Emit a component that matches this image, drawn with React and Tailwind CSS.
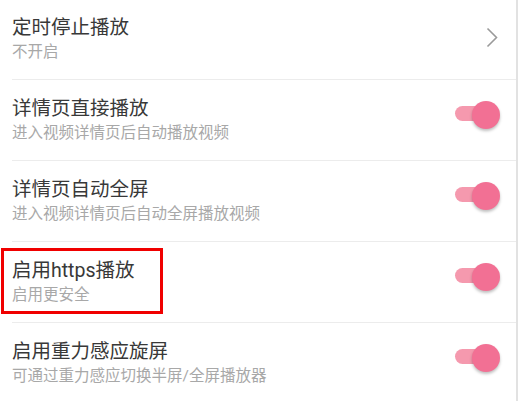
import React, { useState } from 'react';

// 播放设置列表
const items = [
  { id: 'timer', title: '定时停止播放', desc: '不开启', type: 'link' },
  { id: 'autoplay', title: '详情页直接播放', desc: '进入视频详情页后自动播放视频', type: 'switch' },
  { id: 'fullscreen', title: '详情页自动全屏', desc: '进入视频详情页后自动全屏播放视频', type: 'switch' },
  { id: 'https', title: '启用https播放', desc: '启用更安全', type: 'switch', marked: true },
  { id: 'gravity', title: '启用重力感应旋屏', desc: '可通过重力感应切换半屏/全屏播放器', type: 'switch' },
];

const Toggle = ({ on, onClick }) => (
  <button onClick={onClick} className="relative w-[46px] h-[28px] shrink-0">
    <span
      className={`absolute left-0 top-[5px] h-[15px] w-[40px] rounded-full ${
        on ? 'bg-[#f599ae]' : 'bg-[#c8c8c8]'
      }`}
    />
    <span
      className={`absolute top-0 h-[28px] w-[28px] rounded-full shadow-[0_2px_3px_rgba(0,0,0,0.25)] ${
        on ? 'left-[17px] bg-[#f27094]' : 'left-[-6px] bg-[#f5f5f5]'
      }`}
    />
  </button>
);

const Chevron = () => (
  <svg width="12" height="21" viewBox="0 0 12 21" fill="none" className="mr-[18px] mb-[4px]">
    <path d="M1.5 1.5L10.5 10.5L1.5 19.5" stroke="#9a9a9a" strokeWidth="1.6" />
  </svg>
);

export default function App() {
  const [state, setState] = useState({ autoplay: true, fullscreen: true, https: true, gravity: true });

  return (
    <div
      className="flex w-[519px] h-[401px] overflow-hidden bg-white"
      style={{ fontFamily: 'Roboto, "Noto Sans CJK SC", sans-serif' }}
    >
      <div className="relative w-[516px] -mt-[1px]">
        {items.map((item, i) => (
          <div key={item.id}>
            {i > 0 && <div className="ml-3 h-px bg-[#ececec]" />}
            <div className="flex items-center h-[80px] pl-3">
              <div className="flex-1 flex flex-col">
                <span className="text-[19.5px] leading-[24px] text-[#383838]">{item.title}</span>
                <span className="text-[15.5px] leading-[20px] mt-[2px] text-[#a8a8a8]">{item.desc}</span>
              </div>
              {item.type === 'link' ? (
                <Chevron />
              ) : (
                <div className="mr-[15px] mt-[-4px]">
                  <Toggle
                    on={state[item.id]}
                    onClick={() => setState({ ...state, [item.id]: !state[item.id] })}
                  />
                </div>
              )}
            </div>
          </div>
        ))}

        {/* 标注框 */}
        <div className="absolute left-[1px] top-[249px] w-[162px] h-[66px] border-[3px] border-[#f00000] pointer-events-none" />
      </div>
      <div className="w-[2px] bg-[#e2e2e2]" />
    </div>
  );
}
